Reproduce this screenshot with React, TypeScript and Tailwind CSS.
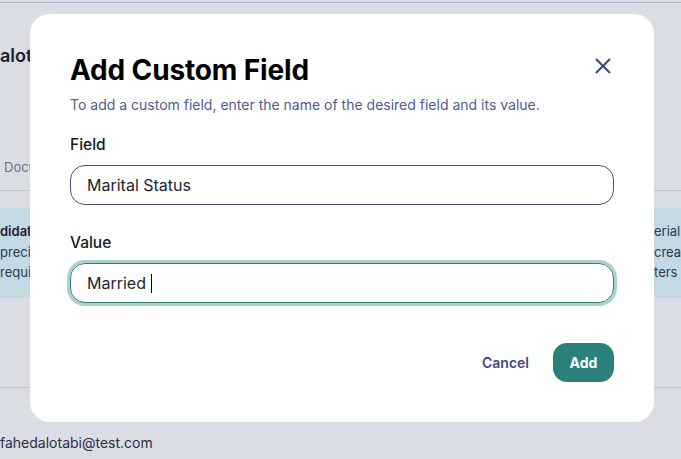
import React from 'react';
import { X } from 'lucide-react';

export default function App() {
  return (
    <div
      className="relative w-[681px] h-[459px] overflow-hidden bg-white text-[#2b2f3a]"
      style={{ fontFamily: 'Inter, "Noto Sans", sans-serif' }}
    >
      {/* Page behind the dialog */}
      <div className="flex flex-col">
        <div className="h-[3px] border-b border-[#cdd5e6]" />
        <div className="h-[104px] pt-[39px]">
          <span className="text-[18px] font-semibold text-[#1f2330]">alotabi</span>
        </div>
        <div className="h-[84px] pl-[4px] pt-[51px] border-b border-[#dfe3ec] text-[13px] text-[#7a8193]">
          Documents
        </div>
        <div className="mt-[17px] h-[90px] bg-[#e4fbfe] flex justify-between pt-[13px] text-[13px] leading-[20.5px] text-[#3a4050]">
          <div>
            <div className="font-semibold text-[#1f2330]">didate</div>
            <div>precise</div>
            <div>required</div>
          </div>
          <div className="w-[27px] whitespace-nowrap">
            <div>erial</div>
            <div>crea</div>
            <div>ters</div>
          </div>
        </div>
        <div className="h-[90px] border-b border-[#dfe3ec]" />
        <div className="pt-[44px] text-[14px] text-[#2f3442]">fahedalotabi@test.com</div>
      </div>

      {/* Overlay */}
      <div className="absolute inset-0 bg-[#091c4b]/15" />

      {/* Dialog */}
      <div className="absolute left-[30px] top-[14px] w-[624px] h-[408px] rounded-[20px] bg-white px-10 pt-10 pb-10 flex flex-col">
        <div className="flex items-start justify-between">
          <h1 className="text-[28px] leading-[32px] font-bold text-black tracking-[-0.15px]">Add Custom Field</h1>
          <button className="mt-[-2px] mr-[-3px] w-[28px] h-[28px] flex items-center justify-center text-[#3d4b80]">
            <X size={26} strokeWidth={1.9} />
          </button>
        </div>
        <p className="mt-[9px] text-[14px] leading-[19px] text-[#4f5d8a]">
          To add a custom field, enter the name of the desired field and its value.
        </p>

        <label className="mt-[21px] text-[15.5px] leading-[20px] font-medium text-[#16181d]">Field</label>
        <div className="mt-[10px] h-[40px] rounded-[15px] border border-[#4a5270] flex items-center pl-4 text-[16px] text-[#22252c]">
          Marital Status
        </div>

        <label className="mt-[28px] text-[15.5px] leading-[20px] font-medium text-[#16181d]">Value</label>
        <div className="mt-[10px] h-[40px] rounded-[15px] border border-[#2e7f78] ring-[3px] ring-[#a9d2ce] flex items-center pl-4 text-[16px] text-[#22252c]">
          Married
          <span className="ml-[5px] w-[1px] h-[19px] bg-black" />
        </div>

        <div className="mt-[40px] flex items-center justify-end gap-6">
          <button className="text-[14px] font-semibold text-[#3f4a7a]">Cancel</button>
          <button className="h-[39px] w-[61px] rounded-[14px] bg-[#2a807a] text-white text-[14px] font-bold">
            Add
          </button>
        </div>
      </div>
    </div>
  );
}
